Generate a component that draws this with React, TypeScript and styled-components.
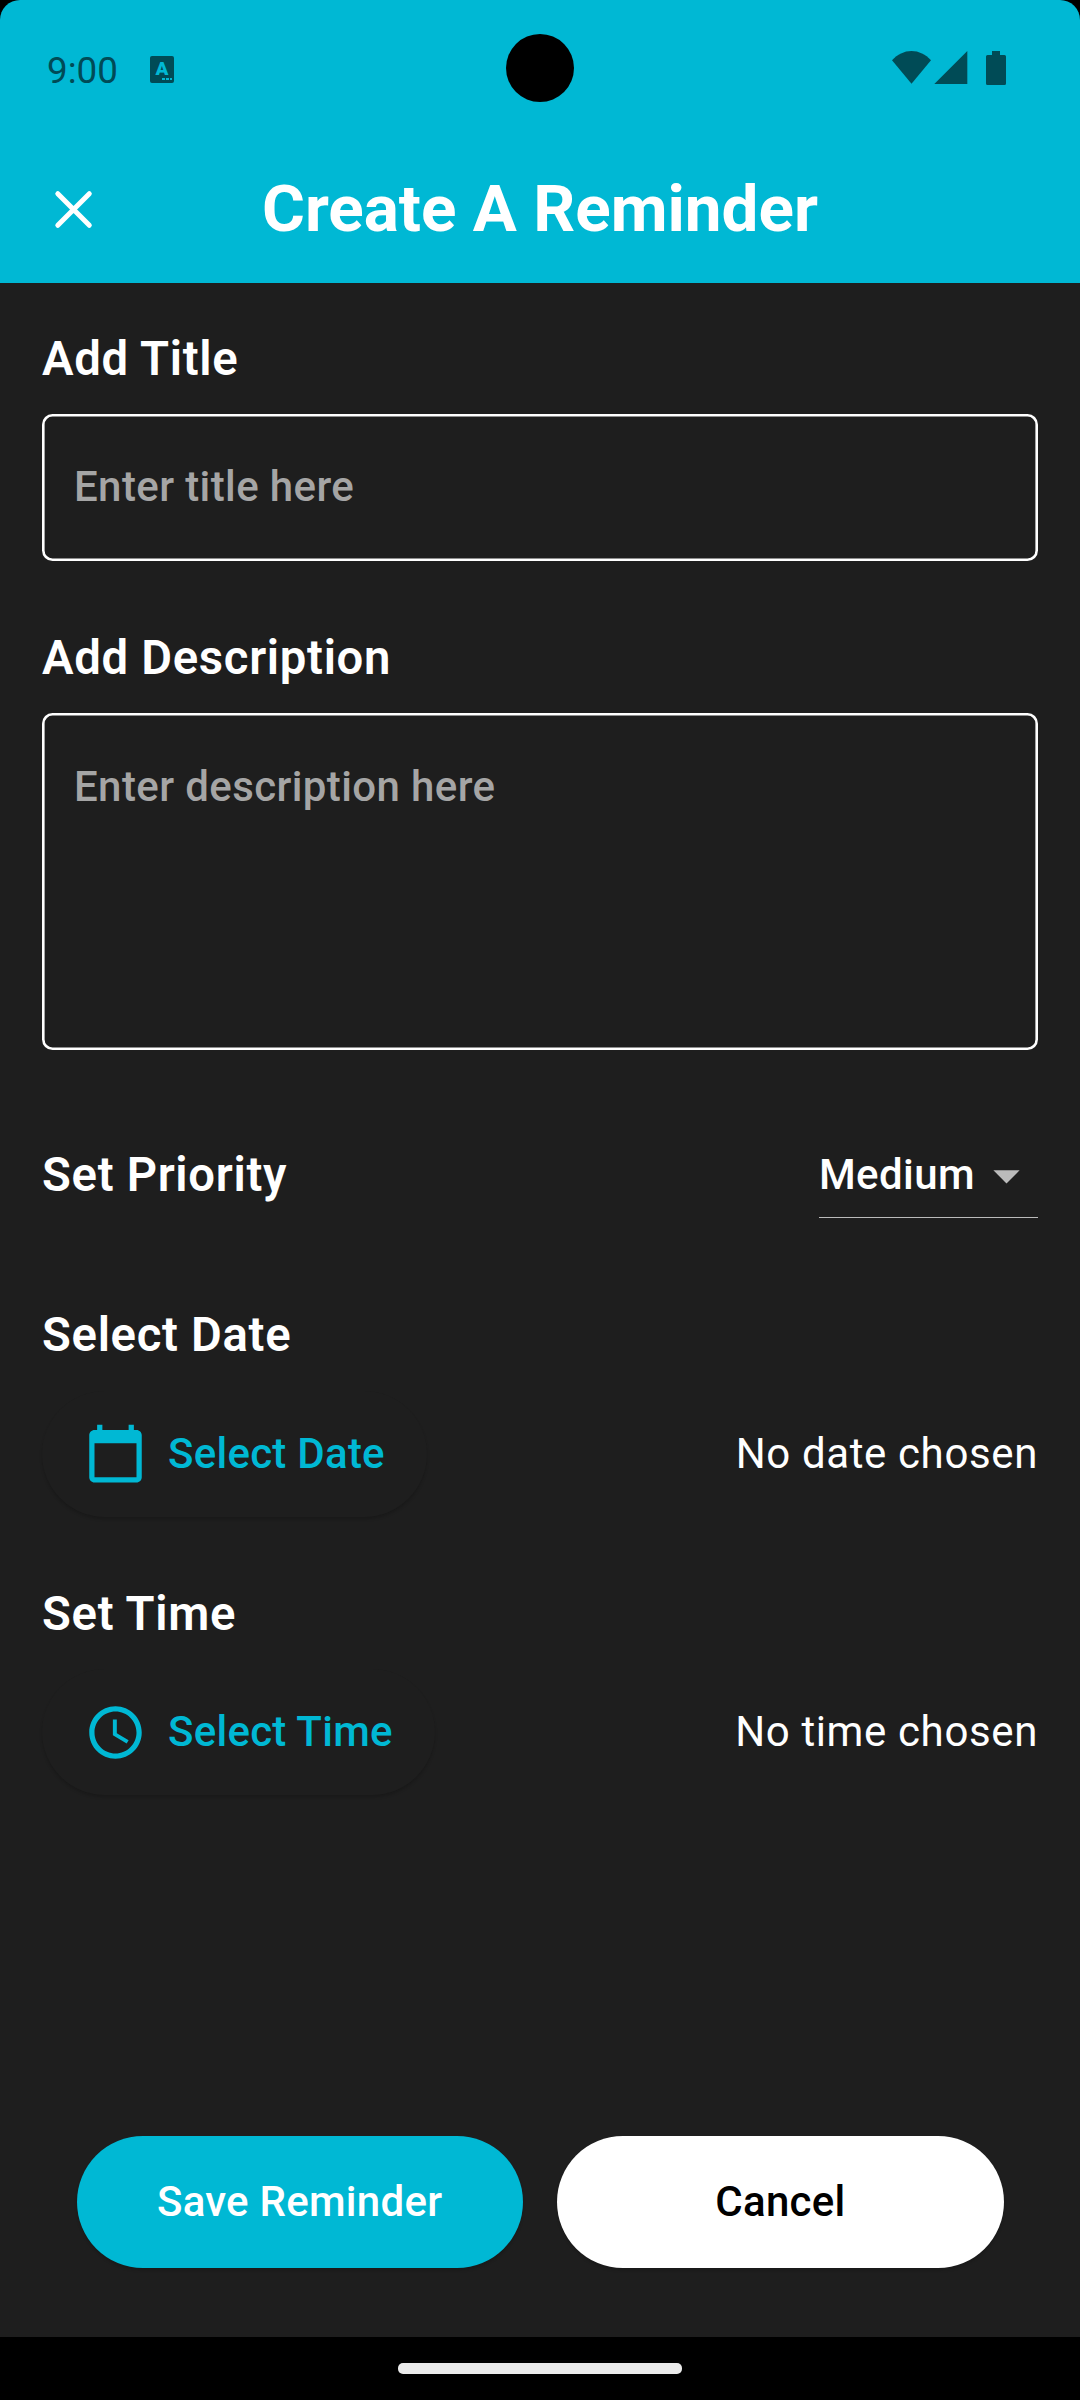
import React from "react";
import styled, { createGlobalStyle, css } from "styled-components";

const color = {
  accent: "#00b8d4",
  surface: "#1e1e1e",
  status: "#004b56",
  hint: "#a5a5a5",
  muted: "#bbbbbb",
};

const GlobalStyle = createGlobalStyle`
  *, *::before, *::after { box-sizing: border-box; }
  body { margin: 0; background: #000; }
  button, input, textarea { font: inherit; }
`;

const Screen = styled.div`
  width: 1080px;
  height: 2400px;
  display: flex;
  flex-direction: column;
  overflow: hidden;
  background: #000;
  color: #fff;
  font-family: Roboto, "Noto Sans", sans-serif;
`;

const Top = styled.header`
  flex: none;
  height: 283px;
  background: ${color.accent};
  border-radius: 20px 20px 0 0;
`;

const StatusBar = styled.div`
  height: 136px;
  padding: 0 74px 0 47px;
  display: grid;
  grid-template-columns: 1fr 68px 1fr;
  align-items: center;
  color: ${color.status};
`;

const StatusLeft = styled.div`
  display: flex;
  align-items: center;
  gap: 32px;
  margin-right: -13px;
`;

const Clock = styled.span`
  font-size: 36.75px;
  line-height: 44px;
  margin-top: 5px;
`;

const LanguageBadge = styled.span`
  width: 24px;
  height: 27px;
  margin-top: 2px;
  border-radius: 2px;
  background: ${color.status};
  display: flex;
  flex-direction: column;
  align-items: center;
`;

const BadgeLetter = styled.span`
  height: 22px;
  font-size: 19px;
  line-height: 26px;
  font-weight: 900;
  color: ${color.accent};
`;

const BadgeDots = styled.span`
  align-self: flex-end;
  display: flex;
  gap: 1.4px;
  margin-right: 1.5px;
  i {
    width: 2.4px;
    height: 2.4px;
    background: ${color.accent};
  }
`;

const Camera = styled.div`
  width: 68px;
  height: 68px;
  margin-left: 13.5px;
  border-radius: 50%;
  background: #000;
`;

const StatusRight = styled.div`
  display: flex;
  justify-content: flex-end;
`;

const AppBar = styled.div`
  height: 147px;
  padding: 0 42px;
  display: grid;
  grid-template-columns: 63px 1fr 63px;
  align-items: center;
`;

const IconButton = styled.button`
  width: 63px;
  height: 63px;
  padding: 0;
  border: 0;
  background: none;
  color: #fff;
  svg { display: block; }
`;

const Title = styled.h1`
  margin: 0 0 2px;
  font-size: 65.625px;
  line-height: 80px;
  font-weight: 700;
  text-align: center;
`;

const Form = styled.main`
  flex: 1;
  padding: 48px 42px 69px;
  display: flex;
  flex-direction: column;
  background: ${color.surface};
`;

const Label = styled.div<{ $gap?: number }>`
  flex: none;
  margin-top: ${(p) => p.$gap ?? 0}px;
  height: 56px;
  font-size: 47.25px;
  line-height: 56px;
  font-weight: 600;
  letter-spacing: 0.69px;
`;

const field = css`
  display: block;
  flex: none;
  width: 100%;
  margin: 27px 0 0;
  border: 0;
  outline: 0;
  resize: none;
  border-radius: 10.5px;
  background: transparent;
  box-shadow: inset 0 0 0 2.6px #fff;
  color: #fff;
  font-size: 42px;
  line-height: 50px;
  font-weight: 500;
  letter-spacing: 0.39px;
  &::placeholder {
    color: ${color.hint};
    opacity: 1;
  }
`;

const TextInput = styled.input`
  ${field}
  height: 147px;
  padding: 0 32px 2px;
`;

const TextArea = styled.textarea`
  ${field}
  height: 337px;
  padding: 49px 32px 0;
  overflow: hidden;
`;

const PriorityRow = styled.div`
  flex: none;
  height: 74px;
  margin-top: 94px;
  display: flex;
  align-items: flex-start;
  justify-content: space-between;
`;

const Select = styled.div`
  height: 74px;
  width: 219px;
  border-bottom: 1px solid ${color.muted};
  display: flex;
  justify-content: space-between;
  font-size: 42px;
  line-height: 62px;
  font-weight: 500;
  letter-spacing: 0.39px;
  svg { flex: none; fill: ${color.muted}; }
`;

const PickerRow = styled.div<{ $gap: number }>`
  flex: none;
  margin-top: ${(p) => p.$gap}px;
  display: flex;
  align-items: center;
  justify-content: space-between;
`;

const PickerButton = styled.button`
  height: 126px;
  padding: 0 42px;
  border: 0;
  border-radius: 63px;
  display: flex;
  align-items: center;
  gap: 21px;
  background: ${color.surface};
  color: ${color.accent};
  font-size: 42px;
  line-height: 50px;
  font-weight: 500;
  letter-spacing: 0.26px;
  box-shadow: 0 2.6px 3px rgba(0, 0, 0, 0.16);
  svg { flex: none; fill: currentColor; }
`;

const Chosen = styled.span`
  font-size: 42px;
  line-height: 50px;
  letter-spacing: 0.63px;
`;

const Actions = styled.div`
  margin-top: auto;
  display: flex;
  justify-content: space-evenly;
`;

const ActionButton = styled.button<{ $primary?: boolean }>`
  width: 446.25px;
  height: 132px;
  padding: 0;
  border: 0;
  border-radius: 66px;
  background: ${(p) => (p.$primary ? color.accent : "#fff")};
  color: ${(p) => (p.$primary ? "#fff" : "#000")};
  font-size: 42px;
  line-height: 50px;
  font-weight: 500;
  letter-spacing: 0.26px;
  box-shadow: 0 2.6px 3px rgba(0, 0, 0, 0.16);
`;

const NavBar = styled.div`
  flex: none;
  height: 63px;
  display: flex;
  align-items: center;
  justify-content: center;
`;

const HomeHandle = styled.div`
  width: 284px;
  height: 11px;
  border-radius: 5px;
  background: #ebebeb;
`;

const StatusIcons = () => (
  <svg width="114" height="34" viewBox="892 51 114 34" fill="currentColor">
    <path d="M911.5 83.7 892 60.2C897.4 54.4 904.2 51 911.5 51s14.1 3.4 19.5 9.2z" />
    <path d="M934.3 84 967.3 51V84z" />
    <path d="M992 51h8v4h4.500a1.500 1.500 0 0 1 1.500 1.500V83.500a1.500 1.500 0 0 1-1.500 1.500h-17a1.500 1.500 0 0 1-1.500-1.500V56.500a1.500 1.500 0 0 1 1.500-1.500h4.500z" />
  </svg>
);

const CloseIcon = () => (
  <svg width="63" height="63" viewBox="0 0 63 63">
    <path
      d="M15.8 15.7 47.3 47.3M47.3 15.7 15.8 47.3"
      stroke="currentColor"
      strokeWidth="5"
      strokeLinecap="round"
    />
  </svg>
);

const MaterialIcon = ({ d, shift = 0 }: { d: string; shift?: number }) => (
  <svg width="63" height="63" viewBox={`0 ${shift} 24 24`}>
    <path d={d} />
  </svg>
);

const arrowDown = "M7 10l5 5 5-5z";
const calendar =
  "M20 3h-1V1h-2v2H7V1H5v2H4c-1.1 0-2 .9-2 2v16c0 1.1.9 2 2 2h16c1.1 0 2-.9 2-2V5c0-1.1-.9-2-2-2zm0 18H4V8h16v13z";
const clock =
  "M11.99 2C6.47 2 2 6.48 2 12s4.47 10 9.99 10C17.52 22 22 17.52 22 12S17.52 2 11.99 2zM12 20c-4.42 0-8-3.58-8-8s3.58-8 8-8 8 3.58 8 8-3.58 8-8 8zm.5-13H11v6l5.25 3.15.75-1.23-4.5-2.67z";

export default function App() {
  return (
    <Screen>
      <GlobalStyle />
      <Top>
        <StatusBar>
          <StatusLeft>
            <Clock>9:00</Clock>
            <LanguageBadge>
              <BadgeLetter>A</BadgeLetter>
              <BadgeDots>
                <i />
                <i />
                <i />
              </BadgeDots>
            </LanguageBadge>
          </StatusLeft>
          <Camera />
          <StatusRight>
            <StatusIcons />
          </StatusRight>
        </StatusBar>
        <AppBar>
          <IconButton aria-label="Close">
            <CloseIcon />
          </IconButton>
          <Title>Create A Reminder</Title>
        </AppBar>
      </Top>

      <Form>
        <Label>Add Title</Label>
        <TextInput placeholder="Enter title here" />

        <Label $gap={69}>Add Description</Label>
        <TextArea placeholder="Enter description here" />

        <PriorityRow>
          <Label $gap={3}>Set Priority</Label>
          <Select>
            Medium
            <MaterialIcon d={arrowDown} />
          </Select>
        </PriorityRow>

        <Label $gap={89}>Select Date</Label>
        <PickerRow $gap={28}>
          <PickerButton>
            <MaterialIcon d={calendar} shift={0.3} />
            Select Date
          </PickerButton>
          <Chosen>No date chosen</Chosen>
        </PickerRow>

        <Label $gap={69}>Set Time</Label>
        <PickerRow $gap={27}>
          <PickerButton>
            <MaterialIcon d={clock} />
            Select Time
          </PickerButton>
          <Chosen>No time chosen</Chosen>
        </PickerRow>

        <Actions>
          <ActionButton $primary>Save Reminder</ActionButton>
          <ActionButton>Cancel</ActionButton>
        </Actions>
      </Form>

      <NavBar>
        <HomeHandle />
      </NavBar>
    </Screen>
  );
}
